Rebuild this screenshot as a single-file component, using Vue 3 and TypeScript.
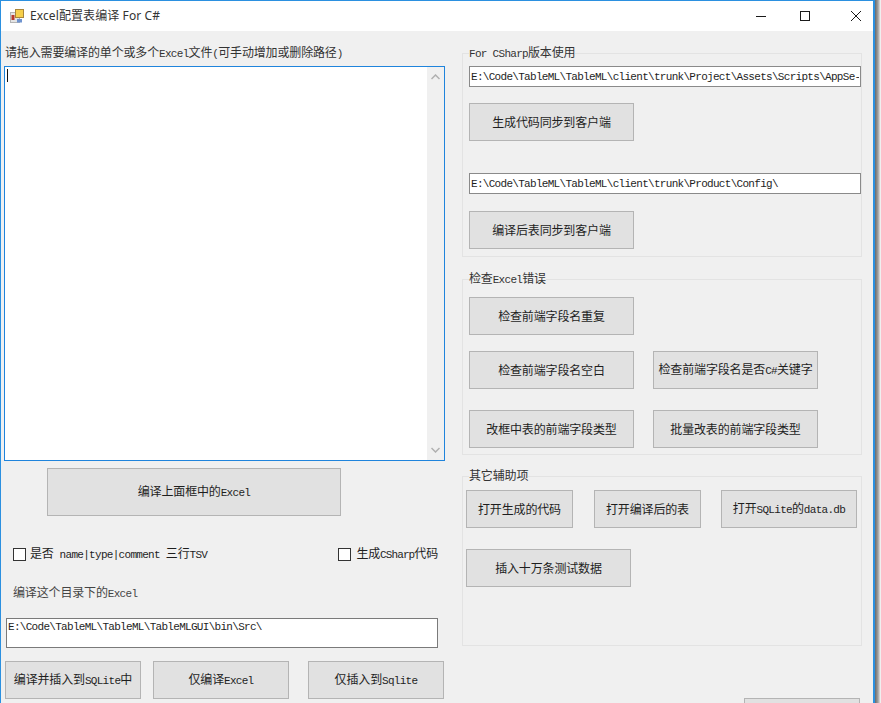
<script setup lang="ts">
interface Part { t: string; lat?: boolean }
const split = (s: string): Part[] =>
  (s.match(/[\x20-\x7e]+|[^\x20-\x7e]+/g) ?? []).map((t) => ({ t, lat: /^[\x20-\x7e]/.test(t) }))
const lbl = (s: string) => split(s)

const pathA = 'E:\\Code\\TableML\\TableML\\client\\trunk\\Project\\Assets\\Scripts\\AppSe-'
const pathB = 'E:\\Code\\TableML\\TableML\\client\\trunk\\Product\\Config\\'
const pathC = 'E:\\Code\\TableML\\TableML\\TableMLGUI\\bin\\Src\\'
</script>

<template>
  <div class="screen">
    <div class="window">
      <header class="titlebar">
        <svg class="appicon" width="14" height="14" viewBox="0 0 14 14">
          <rect x="0.5" y="3.5" width="9" height="10" fill="#e4e4e4" stroke="#b4b4b4" />
          <rect x="5.5" y="0.5" width="8" height="8" fill="#f6cf4a" stroke="#a9863a" />
          <rect x="1.5" y="6" width="3" height="5" fill="#b8392c" />
          <rect x="7" y="10" width="5" height="3.5" fill="#6f93cf" />
        </svg>
        <span class="title">Excel配置表编译 For C#</span>
        <div class="controls">
          <svg class="ctl min" width="10" height="10" viewBox="0 0 10 10"><path d="M0 5.5H10" stroke="#1a1a1a" fill="none" /></svg>
          <svg class="ctl max" width="10" height="10" viewBox="0 0 10 10"><rect x="0.5" y="0.5" width="9" height="9" stroke="#1a1a1a" fill="none" /></svg>
          <svg class="ctl close" width="10" height="10" viewBox="0 0 10 10"><path d="M0 0L10 10M10 0L0 10" stroke="#1a1a1a" fill="none" /></svg>
        </div>
      </header>

      <main class="body">
        <section class="left">
          <p class="lead">
            <template v-for="p in lbl('请拖入需要编译的单个或多个Excel文件(可手动增加或删除路径)')" :key="p.t"><span :class="{ lat: p.lat }">{{ p.t }}</span></template>
          </p>
          <div class="editor">
            <div class="editarea"><i class="caret"></i></div>
            <div class="scroll">
              <svg width="9" height="6" viewBox="0 0 9 6"><path d="M0.5 5L4.5 1L8.5 5" stroke="#b0b0b0" stroke-width="1.5" fill="none" /></svg>
              <svg width="9" height="6" viewBox="0 0 9 6"><path d="M0.5 1L4.5 5L8.5 1" stroke="#b0b0b0" stroke-width="1.5" fill="none" /></svg>
            </div>
          </div>
          <button class="btn compile">
            <template v-for="p in lbl('编译上面框中的Excel')" :key="p.t"><span :class="{ lat: p.lat }">{{ p.t }}</span></template>
          </button>
          <div class="checks">
            <label class="check">
              <i class="box"></i>
              <span>是否<span class="lat"> name|type|comment </span>三行<span class="lat">TSV</span></span>
            </label>
            <label class="check two">
              <i class="box"></i>
              <span>生成<span class="lat">CSharp</span>代码</span>
            </label>
          </div>
          <p class="dirlabel">编译这个目录下的<span class="lat">Excel</span></p>
          <div class="dirbox">{{ pathC }}</div>
          <div class="actions">
            <button class="btn act">编译并插入到<span class="lat">SQLite</span>中</button>
            <button class="btn act">仅编译<span class="lat">Excel</span></button>
            <button class="btn act last">仅插入到<span class="lat">Sqlite</span></button>
          </div>
        </section>

        <section class="right">
          <fieldset class="group g1">
            <legend><span class="lat">For CSharp</span>版本使用</legend>
            <input class="path" readonly :value="pathA" />
            <button class="btn wide m16">生成代码同步到客户端</button>
            <input class="path m32" readonly :value="pathB" />
            <button class="btn wide m17">编译后表同步到客户端</button>
          </fieldset>

          <fieldset class="group g2">
            <legend>检查<span class="lat">Excel</span>错误</legend>
            <button class="btn wide">检查前端字段名重复</button>
            <div class="row r2">
              <button class="btn wide">检查前端字段名空白</button>
              <button class="btn wide">检查前端字段名是否<span class="lat">C#</span>关键字</button>
            </div>
            <div class="row r3">
              <button class="btn wide">改框中表的前端字段类型</button>
              <button class="btn wide">批量改表的前端字段类型</button>
            </div>
          </fieldset>

          <fieldset class="group g3">
            <legend>其它辅助项</legend>
            <div class="row tools">
              <button class="btn tool">打开生成的代码</button>
              <button class="btn tool">打开编译后的表</button>
              <button class="btn tool db">打开<span class="lat">SQLite</span>的<span class="lat">data.db</span></button>
            </div>
            <button class="btn wide insert">插入十万条测试数据</button>
          </fieldset>

          <button class="btn corner"></button>
        </section>
      </main>
    </div>
    <div class="shadow"></div>
  </div>
</template>

<style>
html, body { margin: 0; padding: 0; background: #fff; }
</style>

<style scoped>
.screen { display: flex; width: 881px; height: 703px; overflow: hidden; background: #fff; }
.window {
  width: 875px;
  height: 703px;
  flex: none;
  box-sizing: border-box;
  overflow: hidden;
  border: 1px solid #2b90e0;
  border-right-width: 2px;
  border-bottom: 0;
  background: #f0f0f0;
  color: #1e1e1e;
  font: 12px/16px "Noto Sans CJK SC", "Noto Sans", sans-serif;
  letter-spacing: -0.15px;
  display: flex;
  flex-direction: column;
}
.shadow { width: 6px; flex: none; background: linear-gradient(to right, #6a6a6a, #a0a0a0 50%, #fff); }
.lat {
  font-family: "Liberation Mono", monospace;
  font-size: 11px;
  letter-spacing: -0.7px;
  white-space: pre;
}
.titlebar {
  height: 30px;
  flex: none;
  background: #fff;
  display: flex;
  align-items: center;
  padding-left: 9px;
}
.appicon { margin-right: 6px; }
.title { font-family: "Noto Sans", "Noto Sans CJK SC", sans-serif; font-size: 12px; letter-spacing: 0.1px; color: #333; }
.controls { margin-left: auto; display: flex; align-items: center; height: 100%; padding-right: 12px; }
.ctl { display: block; }
.min { margin-right: 34px; }
.max { margin-right: 41px; }
.body { display: flex; flex: 1; min-height: 0; }
.left { width: 444px; flex: none; padding-left: 3px; box-sizing: border-box; }
.lead { margin: 13px 0 0 1px; height: 16px; color: #333; }
.editor {
  margin-top: 6px;
  width: 441px;
  height: 395px;
  box-sizing: border-box;
  border: 1px solid #1f84dc;
  background: #fff;
  display: flex;
}
.editarea { flex: 1; padding: 2px 0 0 2px; }
.caret { display: block; width: 1px; height: 13px; background: #111; }
.scroll {
  width: 17px;
  background: #f0f0f0;
  display: flex;
  flex-direction: column;
  justify-content: space-between;
  align-items: center;
  padding: 7px 0;
  box-sizing: border-box;
}
.btn {
  display: block;
  box-sizing: border-box;
  padding: 0;
  margin: 0;
  border: 1px solid #b4b4b4;
  background: #e1e1e1;
  color: #1e1e1e;
  font: inherit;
  letter-spacing: inherit;
  white-space: nowrap;
  text-align: center;
  height: 38px;
}
.compile { margin: 7px 0 0 43px; width: 294px; height: 48px; }
.checks { display: flex; justify-content: space-between; margin: 30px 7px 0 9px; height: 16px; }
.check { display: flex; align-items: center; gap: 4px; }
.two { gap: 5px; }
.two .lat { letter-spacing: -0.9px; }
.box { display: block; width: 13px; height: 13px; box-sizing: border-box; border: 1px solid #333; background: #fff; }
.dirlabel { margin: 22px 0 0 9px; height: 16px; color: #444; }
.dirbox {
  margin: 18px 0 0 2px;
  width: 432px;
  height: 30px;
  box-sizing: border-box;
  border: 1px solid #7a7a7a;
  background: #fff;
  padding: 1px 1px;
  font: 11px/14px "Liberation Mono", monospace;
  letter-spacing: -0.7px;
}
.actions { margin: 13px 0 0 1px; display: flex; gap: 12px; }
.act { width: 136px; }
.last { margin-left: 7px; }
.right { flex: 1; padding: 0 0 0 17px; position: relative; }
.group {
  margin: 0;
  width: 400px;
  box-sizing: border-box;
  border: 1px solid #e3e3e3;
  padding: 0 0 0 6px;
  min-width: 0;
}
.group legend {
  padding: 0;
  margin-left: 0;
  font-size: 12px;
  line-height: 14px;
  color: #333;
}
.g1 { margin-top: 14px; height: 212px; }
.g2 { margin-top: 14px; height: 184px; }
.g3 { margin-top: 14px; height: 177px; padding-left: 3px; }
.g3 legend { margin-left: 3px; transform: translateY(-1px); }
.path {
  display: block;
  width: 392px;
  height: 21px;
  box-sizing: border-box;
  margin: 5px 0 0 0;
  border: 1px solid #8a8a8a;
  padding: 0 1px;
  background: #fff;
  color: #1e1e1e;
  outline: none;
  font: 11px "Liberation Mono", monospace;
  letter-spacing: -0.7px;
}
.m32 { margin-top: 32px; }
.wide { width: 165px; }
.m16 { margin-top: 16px; }
.m17 { margin-top: 17px; }
.g2 > .wide { margin-top: 10px; }
.row { display: flex; }
.r2, .r3 { gap: 19px; }
.r2 { margin-top: 16px; }
.r3 { margin-top: 21px; }
.tools { margin-top: 7px; }
.tool { width: 107px; margin-right: 21px; }
.db { width: 136px; margin-right: 0; margin-left: -1px; }
.insert { margin-top: 21px; }
.corner { position: absolute; left: 299px; top: 667px; width: 116px; }
</style>
